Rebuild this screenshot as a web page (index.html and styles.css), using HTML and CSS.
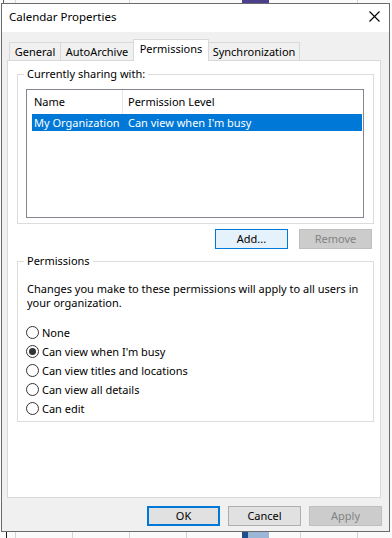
FILE: index.html
```html
<!DOCTYPE html>
<html>
<head>
<meta charset="utf-8">
<link rel="stylesheet" href="styles.css">
</head>
<body>
<div class="desk desk-top"></div>
<div class="dialog">
  <div class="titlebar">
    <span class="title">Calendar Properties</span>
    <svg class="close" width="11" height="11" viewBox="0 0 11 11"><path d="M0.5 0.5 L10.5 10.5 M10.5 0.5 L0.5 10.5" stroke="#000" stroke-width="1.1" fill="none"/></svg>
  </div>
  <div class="body">
    <div class="tabs">
      <div class="tab t-general">General</div>
      <div class="tab t-auto">AutoArchive</div>
      <div class="tab active t-perm">Permissions</div>
      <div class="tab t-sync">Synchronization</div>
    </div>
    <div class="panel">
      <div class="group sharing">
        <div class="group-label">Currently sharing with:</div>
        <div class="listbox">
          <div class="lv-header">
            <div class="hcol hcol-name">Name</div>
            <div class="hcol hcol-level">Permission Level</div>
          </div>
          <div class="lv-row selected">
            <div class="rcol rcol-name">My Organization</div>
            <div class="rcol rcol-level">Can view when I'm busy</div>
          </div>
        </div>
      </div>
      <div class="btn-row">
        <button class="btn hot">Add...</button>
        <button class="btn disabled">Remove</button>
      </div>
      <div class="group perms">
        <div class="group-label">Permissions</div>
        <p class="note">Changes you make to these permissions will apply to all users in<br>your organization.</p>
        <div class="radios">
          <div class="radio"><span class="circle"></span><span>None</span></div>
          <div class="radio"><span class="circle checked"></span><span>Can view when I'm busy</span></div>
          <div class="radio"><span class="circle"></span><span>Can view titles and locations</span></div>
          <div class="radio"><span class="circle"></span><span>Can view all details</span></div>
          <div class="radio"><span class="circle"></span><span>Can edit</span></div>
        </div>
      </div>
    </div>
    <div class="footer">
      <button class="btn default">OK</button>
      <button class="btn">Cancel</button>
      <button class="btn disabled">Apply</button>
    </div>
  </div>
</div>
<div class="desk desk-bottom"></div>
</body>
</html>
```
FILE: styles.css
```css
html, body {
  margin: 0;
  padding: 0;
}
body {
  width: 392px;
  height: 538px;
  overflow: hidden;
  background: #fafafa;
  font-family: "Noto Sans", "DejaVu Sans", sans-serif;
  font-size: 11px;
  color: #000;
}
.desk-top {
  height: 3px;
  background:
    linear-gradient(#5a5a5a, #5a5a5a) 3px 0 / 1px 100% no-repeat,
    linear-gradient(#d4d4d4, #d4d4d4) 15px 0 / 1px 100% no-repeat,
    linear-gradient(#d4d4d4, #d4d4d4) 129px 0 / 1px 100% no-repeat,
    linear-gradient(#4e3f8c, #4e3f8c) 242px 0 / 27px 100% no-repeat,
    linear-gradient(#d4d4d4, #d4d4d4) 357px 0 / 1px 100% no-repeat,
    #fafafa;
}
.desk-bottom {
  height: 6px;
  background:
    linear-gradient(#1a1a1a, #1a1a1a) 6px 0 / 1px 100% no-repeat,
    linear-gradient(#d4d4d4, #d4d4d4) 15px 0 / 1px 100% no-repeat,
    linear-gradient(#d4d4d4, #d4d4d4) 72px 0 / 1px 100% no-repeat,
    linear-gradient(#d4d4d4, #d4d4d4) 129px 0 / 1px 100% no-repeat,
    linear-gradient(#d4d4d4, #d4d4d4) 186px 0 / 1px 100% no-repeat,
    linear-gradient(#1e4e8c, #1e4e8c) 242px 0 / 6px 100% no-repeat,
    linear-gradient(#9bb6d6, #9bb6d6) 248px 0 / 21px 100% no-repeat,
    linear-gradient(#d4d4d4, #d4d4d4) 300px 0 / 1px 100% no-repeat,
    linear-gradient(#d4d4d4, #d4d4d4) 357px 0 / 1px 100% no-repeat,
    #fafafa;
}
.dialog {
  margin-left: 1px;
  width: 389px;
  height: 529px;
  box-sizing: border-box;
  border: 1px solid #6b6b6b;
  background: #f0f0f0;
  display: flex;
  flex-direction: column;
}
.titlebar {
  height: 28px;
  flex: none;
  background: #fff;
  display: flex;
  align-items: center;
  padding-left: 7px;
}
.title {
  font-size: 11.5px;
  line-height: 16px;
  padding-bottom: 2px;
}
.close {
  margin-left: auto;
  margin-right: 9px;
  align-self: flex-start;
  margin-top: 7px;
  display: block;
}
.body {
  flex: 1;
  display: flex;
  flex-direction: column;
}
.tabs {
  display: flex;
  align-items: flex-end;
  padding-top: 7px;
  padding-left: 7px;
  height: 22px;
}
.tab {
  box-sizing: border-box;
  height: 18px;
  margin-bottom: 1px;
  border: 1px solid #d9d9d9;
  border-bottom: none;
  background: #f0f0f0;
  display: flex;
  align-items: center;
  justify-content: center;
  line-height: 14px;
  margin-left: -1px;
}
.t-general { width: 52px; margin-left: 0; }
.t-auto { width: 74px; }
.t-perm { width: 76px; }
.t-sync { width: 92px; }
.tab.active {
  height: 22px;
  margin-bottom: 0;
  background: #fff;
  position: relative;
  z-index: 1;
  padding-bottom: 3px;
}
.panel {
  margin-top: -1px;
  margin-left: 5px;
  width: 374px;
  height: 438px;
  box-sizing: border-box;
  border: 1px solid #d9d9d9;
  background: #fff;
  display: flex;
  flex-direction: column;
}
.group {
  margin-left: 9px;
  width: 357px;
  box-sizing: border-box;
  border: 1px solid #dcdcdc;
}
.sharing {
  margin-top: 13px;
  height: 150px;
}
.group-label {
  margin-top: -8px;
  margin-left: 6px;
  padding: 0 3px;
  width: fit-content;
  background: #fff;
  line-height: 14px;
}
.listbox {
  margin-top: 8px;
  margin-left: 8px;
  width: 338px;
  height: 129px;
  box-sizing: border-box;
  border: 1px solid #828790;
  background: #fff;
}
.lv-header {
  display: flex;
  height: 24px;
}
.hcol {
  display: flex;
  align-items: center;
  line-height: 14px;
}
.hcol-name {
  width: 88px;
  padding-left: 7px;
  border-right: 1px solid #e5e5e5;
}
.hcol-level {
  padding-left: 5px;
}
.lv-row {
  display: flex;
  height: 17px;
  align-items: center;
  margin-left: 5px;
  margin-right: 1px;
  line-height: 14px;
}
.lv-row.selected {
  background: #0078d7;
  color: #fff;
}
.rcol-name {
  width: 94px;
  padding-left: 2px;
}
.btn-row {
  display: flex;
  justify-content: flex-end;
  gap: 11px;
  margin-top: 5px;
  padding-right: 8px;
}
.btn {
  width: 73px;
  height: 20px;
  box-sizing: border-box;
  border: 1px solid #adadad;
  background: #e1e1e1;
  font-family: inherit;
  font-size: 11px;
  color: #000;
  padding: 0;
  margin: 0;
  line-height: 14px;
}
.btn.hot {
  border-color: #0078d7;
  background: #e5f1fb;
}
.btn.disabled {
  border-color: #bfbfbf;
  background: #cccccc;
  color: #838383;
}
.btn.default {
  border: 2px solid #0078d7;
}
.perms {
  margin-top: 12px;
  height: 161px;
}
.note {
  margin: 14px 0 0 0;
  padding-left: 9px;
  line-height: 14px;
  white-space: nowrap;
}
.radios {
  margin-top: 13px;
  display: flex;
  flex-direction: column;
}
.radio {
  height: 19px;
  display: flex;
  align-items: center;
  padding-left: 8px;
  line-height: 14px;
}
.circle {
  width: 13px;
  height: 13px;
  box-sizing: border-box;
  border: 1px solid #333;
  border-radius: 50%;
  background: #fff;
  margin-right: 3px;
  display: flex;
  align-items: center;
  justify-content: center;
  flex: none;
}
.circle.checked::after {
  content: "";
  width: 7px;
  height: 7px;
  border-radius: 50%;
  background: #333;
}
.footer {
  display: flex;
  justify-content: flex-end;
  gap: 8px;
  margin-top: 8px;
  padding-right: 7px;
}
```
